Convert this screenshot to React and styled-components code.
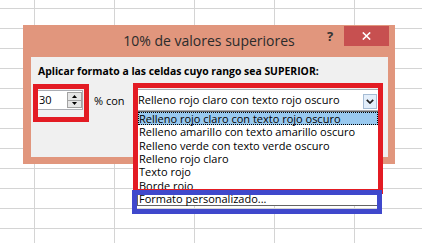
import React from 'react';
import styled, { createGlobalStyle } from 'styled-components';

const GlobalStyle = createGlobalStyle`
  html, body { margin: 0; padding: 0; }
  body {
    width: 422px;
    height: 243px;
    overflow: hidden;
    background-color: #ffffff;
    background-image:
      linear-gradient(to right, #d4d4d4 1px, transparent 1px),
      linear-gradient(to bottom, #d4d4d4 1px, transparent 1px);
    background-size: 80px 20px;
    background-position: 34px 8px;
    font-family: "Open Sans", "Noto Sans", sans-serif;
  }
`;

const Sheet = styled.div`
  width: 422px;
  height: 243px;
  box-sizing: border-box;
  padding: 25px 0 0 23px;
`;

const Dialog = styled.div`
  width: 372px;
  height: 139px;
  background: #e1967d;
  display: flex;
  flex-direction: column;
`;

const TitleBar = styled.div`
  height: 32px;
  flex: none;
  display: grid;
  grid-template-columns: 1fr auto 1fr;
  align-items: center;
`;

const Title = styled.div`
  grid-column: 2;
  font-size: 14px;
  line-height: 32px;
  color: #2b2b2b;
  white-space: nowrap;
`;

const Controls = styled.div`
  grid-column: 3;
  justify-self: end;
  align-self: start;
  display: flex;
  align-items: center;
  gap: 2px;
  padding: 1px 6px 0 0;
`;

const HelpButton = styled.div`
  width: 24px;
  height: 20px;
  display: flex;
  align-items: center;
  justify-content: center;
  font-size: 13px;
  font-weight: 700;
  color: #333333;
`;

const CloseButton = styled.div`
  width: 45px;
  height: 20px;
  background: #c75050;
  display: flex;
  align-items: center;
  justify-content: center;
`;

const Body = styled.div`
  flex: 1;
  margin: 0 7px 7px 8px;
  background: #f0f0f0;
  padding: 6px 0 0 6px;
  position: relative;
`;

const Label = styled.div`
  font-size: 10.4px;
  font-weight: 700;
  line-height: 16px;
  color: #000000;
  padding-left: 1px;
  white-space: nowrap;
`;

const Row = styled.div`
  display: flex;
  align-items: center;
  margin-top: 10px;
`;

const Spin = styled.div`
  position: relative;
  display: flex;
  width: 46px;
  height: 20px;
  box-sizing: border-box;
  border: 1px solid #abadb3;
  background: #ffffff;
`;

const SpinField = styled.div`
  flex: 1;
  font-size: 11px;
  line-height: 18px;
  padding-left: 1px;
  color: #000000;
`;

const SpinButtons = styled.div`
  width: 15px;
  margin: 1px 0 1px 0;
  display: flex;
  flex-direction: column;
  border: 1px solid #a3a3a3;
  box-sizing: border-box;
  background: #e6e6e6;
`;

const SpinButton = styled.div`
  flex: 1;
  display: flex;
  align-items: center;
  justify-content: center;
  border-top: ${p => (p.$down ? '1px solid #a3a3a3' : 'none')};
`;

const PercentLabel = styled.div`
  width: 43px;
  margin-left: 11px;
  font-size: 11px;
  color: #000000;
  white-space: nowrap;
`;

const Select = styled.div`
  position: relative;
  width: 242px;
  height: 22px;
  box-sizing: border-box;
  border: 1px solid #abadb3;
  background: #ffffff;
  display: flex;
  align-items: flex-end;
  padding: 0 1px 1px 0;
`;

const SelectValue = styled.div`
  flex: 1;
  align-self: center;
  font-size: 11px;
  color: #000000;
  white-space: nowrap;
  overflow: hidden;
`;

const DropButton = styled.div`
  width: 14px;
  height: 15px;
  box-sizing: border-box;
  border: 1px solid #a6bcd4;
  background: #e3eefa;
  display: flex;
  align-items: center;
  justify-content: center;
`;

const List = styled.div`
  position: absolute;
  top: 21px;
  left: -1px;
  width: 242px;
  box-sizing: border-box;
  border: 1px solid #646464;
  background: #ffffff;
  z-index: 1;
`;

const ListItem = styled.div`
  font-size: 11px;
  height: 13.33px;
  line-height: 13.33px;
  padding-left: 1px;
  outline: ${p => (p.$selected ? '1px dotted #000000' : 'none')};
  outline-offset: -1px;
  background: ${p => (p.$selected ? '#99c9ef' : 'transparent')};
  color: #000000;
  white-space: nowrap;
`;

const Mark = styled.div`
  position: absolute;
  inset: ${p => p.$inset};
  border: 5px solid ${p => p.$color};
  pointer-events: none;
  z-index: ${p => p.$layer};
`;

const RED = '#e31b23';
const BLUE = '#3f48cc';

const items = [
  'Relleno rojo claro con texto rojo oscuro',
  'Relleno amarillo con texto amarillo oscuro',
  'Relleno verde con texto verde oscuro',
  'Relleno rojo claro',
  'Texto rojo',
  'Borde rojo',
  'Formato personalizado...',
];

export default function App() {
  return (
    <>
      <GlobalStyle />
      <Sheet>
        <Dialog>
          <TitleBar>
            <Title>10% de valores superiores</Title>
            <Controls>
              <HelpButton>?</HelpButton>
              <CloseButton>
                <svg width="9" height="8" viewBox="0 0 9 8">
                  <path d="M0.8 0.4 L8.2 7.6 M8.2 0.4 L0.8 7.6" stroke="#ffffff" strokeWidth="1.5" />
                </svg>
              </CloseButton>
            </Controls>
          </TitleBar>
          <Body>
            <Label>Aplicar formato a las celdas cuyo rango sea SUPERIOR:</Label>
            <Row>
              <Spin>
                <SpinField>30</SpinField>
                <SpinButtons>
                  <SpinButton>
                    <svg width="5" height="3" viewBox="0 0 5 3">
                      <path d="M0 3 L2.5 0 L5 3 Z" fill="#000000" />
                    </svg>
                  </SpinButton>
                  <SpinButton $down>
                    <svg width="5" height="3" viewBox="0 0 5 3">
                      <path d="M0 0 L2.5 3 L5 0 Z" fill="#000000" />
                    </svg>
                  </SpinButton>
                </SpinButtons>
                <Mark $color={RED} $layer={2} $inset="-7px -7px -13px -5px" />
              </Spin>
              <PercentLabel>% con</PercentLabel>
              <Select>
                <SelectValue>Relleno rojo claro con texto rojo oscuro</SelectValue>
                <DropButton>
                  <svg width="8" height="5" viewBox="0 0 8 5">
                    <path d="M0.8 0.8 L4 4 L7.2 0.8" stroke="#1e1e1e" strokeWidth="1.7" fill="none" />
                  </svg>
                </DropButton>
                <List>
                  {items.map((t, i) => (
                    <ListItem key={t} $selected={i === 0}>{t}</ListItem>
                  ))}
                </List>
                <Mark $color={RED} $layer={2} $inset="-7px -5px -84px -5px" />
                <Mark $color={BLUE} $layer={3} $inset="100px -4px -104px -6px" />
              </Select>
            </Row>
          </Body>
        </Dialog>
      </Sheet>
    </>
  );
}
